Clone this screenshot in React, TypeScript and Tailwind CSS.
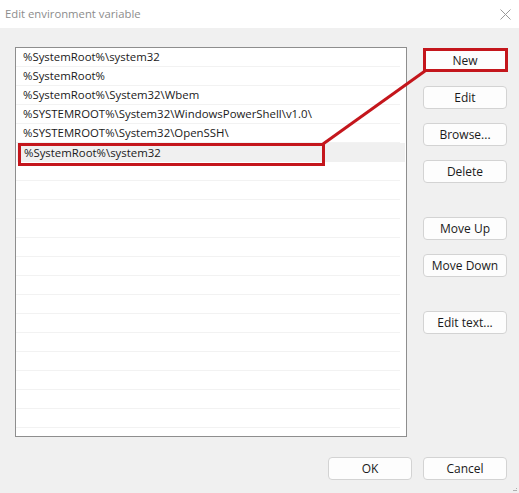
import React from "react";

const entries = [
  "%SystemRoot%\\system32",
  "%SystemRoot%",
  "%SystemRoot%\\System32\\Wbem",
  "%SYSTEMROOT%\\System32\\WindowsPowerShell\\v1.0\\",
  "%SYSTEMROOT%\\System32\\OpenSSH\\",
  "%SystemRoot%\\system32",
];

const TOTAL_ROWS = 21;
const SELECTED = 5;

function Btn({ label, className = "" }: { label: string; className?: string }) {
  return (
    <div
      className={`flex h-[23px] w-[84px] items-center justify-center rounded-[4px] border border-[#d3d3d3] bg-[#fdfdfd] text-[12px] text-[#1a1a1a] ${className}`}
    >
      {label}
    </div>
  );
}

export default function App() {
  const rows = Array.from({ length: TOTAL_ROWS }, (_, i) => entries[i] ?? "");
  return (
    <div
      className="relative flex h-[493px] w-[519px] flex-col overflow-hidden bg-[#f0f0f0]"
      style={{ fontFamily: '"Open Sans", "Noto Sans", sans-serif' }}
    >
      {/* title bar */}
      <div className="flex h-[28px] items-center justify-between bg-white pl-[5px] pr-[8px]">
        <span className="text-[11.3px] text-[#8c8c8c]">Edit environment variable</span>
        <svg width="11" height="11" viewBox="0 0 11 11" className="mt-[1px]">
          <path d="M0.5 0.5 L10.5 10.5 M10.5 0.5 L0.5 10.5" stroke="#9a9a9a" strokeWidth="1" />
        </svg>
      </div>

      {/* body */}
      <div className="flex flex-1 flex-col pl-[15px] pr-[12px] pt-[19px]">
        <div className="flex">
          {/* path list */}
          <div className="h-[390px] w-[392px] overflow-hidden border border-[#8e8e8e] bg-white">
            {rows.map((text, i) => (
              <div
                key={i}
                className={`flex h-[19px] items-center pl-[7px] text-[11.4px] text-[#1a1a1a] ${
                  i === SELECTED ? "mx-[1px] bg-[#f0f0f0]" : "mr-[6px] border-b border-[#f2f2f2]"
                }`}
              >
                {text}
              </div>
            ))}
          </div>

          {/* action buttons */}
          <div className="ml-[16px] flex flex-col pt-[2px]">
            <Btn label="New" />
            <Btn label="Edit" className="mt-[14px]" />
            <Btn label="Browse..." className="mt-[14px]" />
            <Btn label="Delete" className="mt-[14px]" />
            <Btn label="Move Up" className="mt-[34px]" />
            <Btn label="Move Down" className="mt-[14px]" />
            <Btn label="Edit text..." className="mt-[34px]" />
          </div>
        </div>

        <div className="mt-[20px] flex justify-end gap-[11px]">
          <Btn label="OK" />
          <Btn label="Cancel" />
        </div>
      </div>

      {/* callout highlighting the new entry and the New button */}
      <svg className="pointer-events-none absolute left-0 top-0" width="519" height="493">
        <rect x="19.5" y="144.5" width="304" height="20" fill="none" stroke="#c4161c" strokeWidth="3" />
        <rect x="424.5" y="49.5" width="82" height="21" fill="none" stroke="#c4161c" strokeWidth="3" />
        <line x1="323" y1="144" x2="425" y2="71" stroke="#c4161c" strokeWidth="3" />
      </svg>

      {/* size grip */}
      <div className="absolute bottom-[2px] right-[2px] flex flex-col items-end gap-[1px]">
        <div className="h-[1px] w-[1px] bg-[#b0b0b0]" />
        <div className="h-[1px] w-[4px] bg-[#b0b0b0]" />
      </div>
    </div>
  );
}
